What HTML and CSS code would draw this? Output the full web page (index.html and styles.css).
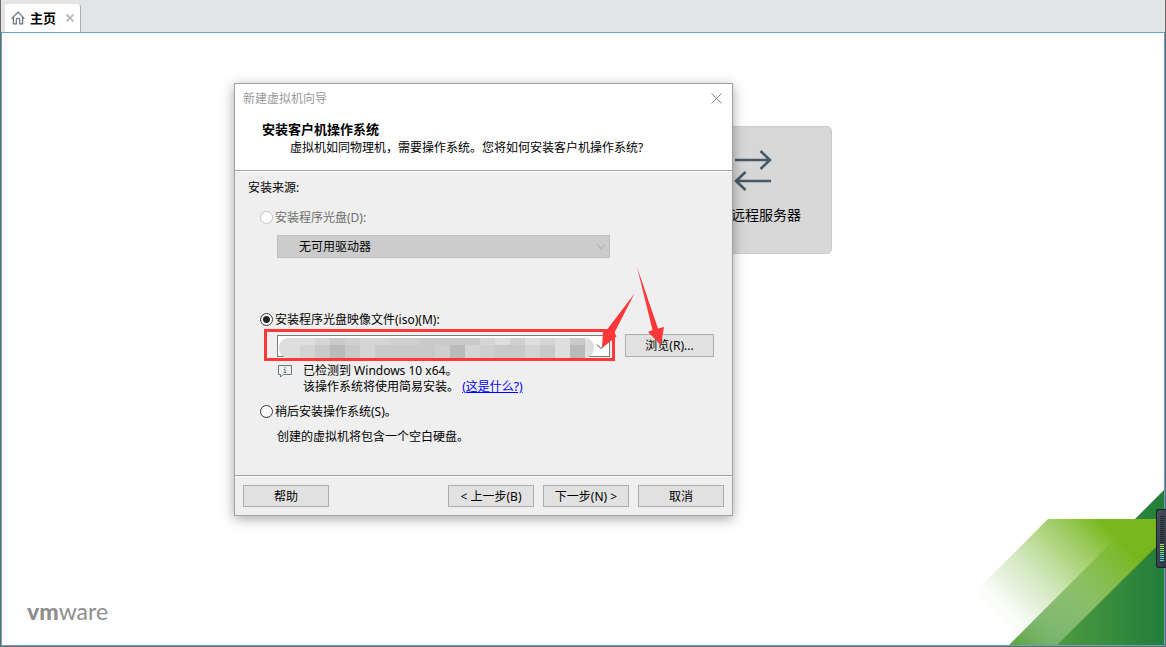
FILE: index.html
```html
<!DOCTYPE html>
<html lang="zh-CN">
<head>
<meta charset="utf-8">
<title>主页</title>
<link rel="stylesheet" href="styles.css">
</head>
<body>
<div class="app">
  <nav class="tabs">
    <div class="tab">
      <svg class="home" viewBox="0 0 14 14" width="14" height="14" fill="none" stroke="#5f7180" stroke-width="1.2"><path d="M.6 7.6 7 1.2l6.4 6.4M2.4 6.2v6.6h2.9V9q0-1.6 1.7-1.6T8.700 9v3.800h2.900V6.200"/></svg>
      <span class="tab-name">主页</span>
      <button class="tab-close" aria-label="关闭标签页"><svg viewBox="0 0 8 8" width="8" height="8" stroke="#bebebe" stroke-width="2"><path d="M.5.500l7 7M7.500.500l-7 7"/></svg></button>
    </div>
  </nav>
  <main class="workspace">
    <button class="card">
      <svg viewBox="0 0 40 42" width="40" height="42" fill="none" stroke="#465a66" stroke-width="2.600"><path d="M2 11h35M27.500 2l9.500 9-9.500 9M38 32H3M12.500 23 3 32l9.500 9"/></svg>
      <span>远程服务器</span>
    </button>
    <div class="brand"><b>vm</b>ware</div>
    <svg class="art" viewBox="922 490 242 155" width="242" height="155">
      <defs>
        <linearGradient id="dark" gradientUnits="userSpaceOnUse" x1="1009" y1="0" x2="1158" y2="0"><stop offset="0" stop-color="#60a843"/><stop offset="1" stop-color="#247f3a"/></linearGradient>
        <linearGradient id="light" gradientUnits="userSpaceOnUse" x1="984" y1="613" x2="1088" y2="509"><stop offset="0" stop-color="#fff" stop-opacity="0"/><stop offset=".25" stop-color="#c5dfb2" stop-opacity=".4"/><stop offset=".6" stop-color="#a3cf70" stop-opacity=".75"/><stop offset="1" stop-color="#78b81e"/></linearGradient>
      </defs>
      <path d="M1164 490v155h-155z" fill="url(#dark)"/>
      <path d="M1048 519h116v20l-107 106H922z" fill="url(#light)"/>
    </svg>

    <section class="dialog" role="dialog" aria-labelledby="wizard-title">
      <header class="head">
        <div class="titlebar">
          <span id="wizard-title">新建虚拟机向导</span>
          <button class="close" aria-label="关闭"><svg viewBox="0 0 11 11" width="11" height="11" stroke="#858585"><path d="M.5.500l10 10M10.500.500l-10 10"/></svg></button>
        </div>
        <h1>安装客户机操作系统</h1>
        <p>虚拟机如同物理机，需要操作系统。您将如何安装客户机操作系统?</p>
      </header>
      <form class="body">
        <div class="source">安装来源:</div>
        <label class="choice off"><input type="radio" name="src" disabled>安装程序光盘(D):</label>
        <div class="combo drive">
          <select aria-label="光盘驱动器" disabled><option>无可用驱动器</option></select>
          <svg class="chev" viewBox="0 0 10 6" width="10" height="6" fill="none" stroke="#a3a3a3"><path d="M1 .500l4 4 4-4"/></svg>
        </div>
        <label class="choice iso"><input type="radio" name="src" checked>安装程序光盘映像文件(iso)(M):</label>
        <div class="file-row">
          <div class="combo file">
            <select aria-label="映像文件"><option></option></select>
            <svg class="chev" viewBox="0 0 10 6" width="10" height="6" fill="none" stroke="#444"><path d="M1 .500l4 4 4-4"/></svg>
            <svg class="mosaic" viewBox="0 0 315 20" width="315" height="20" shape-rendering="crispEdges">
              <defs><clipPath id="pill"><rect width="315" height="20" rx="9"/></clipPath></defs>
              <g clip-path="url(#pill)">
                <path fill="#dedede" d="M0 0h315v20H0z"/>
                <path fill="#d5d5d5" d="M36 0h15v7H36zM81 0h30v7H81zM201 0h15v7h-15zM261 0h15v7h-15z"/>
                <path fill="#cacaca" d="M51 0h15v7H51zM141 0h60v7h-60zM291 0h15v7h-15z"/>
                <path fill="#d0d0d0" d="M66 0h15v7H66zM111 0h30v7h-30zM231 0h15v7h-15z"/>
                <path fill="#d4d4d4" d="M21 7h15v13H21zM81 7h15v13H81zM186 7h15v13h-15zM246 7h15v13h-15z"/>
                <path fill="#c9c9c9" d="M36 7h15v13H36zM66 7h15v13H66zM96 7h60v13H96zM216 7h30v13h-30zM261 7h15v13h-15z"/>
                <path fill="#bababa" d="M51 7h15v13H51zM171 7h15v13h-15zM291 7h15v13h-15z"/>
                <path fill="#cfcfcf" d="M156 7h15v13h-15zM201 7h15v13h-15z"/>
              </g>
            </svg>
            <div class="mark"></div>
          </div>
          <button type="button" class="btn browse">浏览(R)...</button>
        </div>
        <div class="info">
          <svg viewBox="0 0 15 13" width="15" height="13" fill="none" stroke="#687985"><path d="M.5.500h13v9H5.500l-3 2.500V9.500h-2z"/><path d="M7 2v1.500M5.500 4.500h1.500v3M5.500 7.500h3"/></svg>
          <div>已检测到 Windows 10 x64。<br>该操作系统将使用简易安装。 <a href="#">(这是什么?)</a></div>
        </div>
        <label class="choice later"><input type="radio" name="src">稍后安装操作系统(S)。</label>
        <p class="note">创建的虚拟机将包含一个空白硬盘。</p>
      </form>
      <footer class="foot">
        <button class="btn help">帮助</button>
        <button class="btn">&lt; 上一步(B)</button>
        <button class="btn">下一步(N) &gt;</button>
        <button class="btn">取消</button>
      </footer>
      <svg class="arrows" viewBox="600 265 70 90" width="70" height="90" fill="#fd3838"><path d="M634.500 293.500 614.500 332.500l2 4L602 348l1-17 4.500-2zM637 267l21 61.500 6-1.500-3 18-13-13 4.500-2z"/></svg>
    </section>
  </main>
  <aside class="meter" aria-hidden="true">
    <svg viewBox="0 0 4 46" width="4" height="46" shape-rendering="crispEdges">
      <path stroke="#20262c" stroke-width="4" stroke-dasharray="1 1" d="M2 0v28"/>
      <path stroke="#a0e850" stroke-width="4" stroke-dasharray="1 1" d="M2 28v6"/>
      <path stroke="#70e690" stroke-width="4" stroke-dasharray="1 1" d="M2 34v6"/>
      <path stroke="#40e4cc" stroke-width="4" stroke-dasharray="1 1" d="M2 40v6"/>
    </svg>
  </aside>
</div>
</body>
</html>
```
FILE: styles.css
```css
* { box-sizing: border-box; }
body {
  margin: 0;
  font: 12px/16px "Noto Sans", "Noto Sans CJK SC", sans-serif;
  color: #000;
}
button, select { font: inherit; color: inherit; }
.app {
  position: relative;
  display: flex;
  flex-direction: column;
  min-height: 100vh;
  border: 1px solid #6c6769;
  border-top: 0;
  background: #e3e4e6;
}
.tabs { display: flex; height: 32px; padding: 4px 0 0 4px; }
.tab {
  display: flex;
  align-items: center;
  padding: 0 6px;
  background: #fff;
  border-right: 1px solid #a9adb0;
  border-radius: 3px 3px 0 0;
}
.tab-name { margin-left: 5px; font-size: 13px; font-weight: bold; }
.tab-close { display: flex; margin-left: 10px; padding: 0; border: 0; background: none; }
.workspace {
  position: relative;
  flex: 1;
  padding-top: 93px;
  border: 1px solid #62a4c4;
  background: #fff;
  overflow: hidden;
}
.card {
  display: flex;
  flex-direction: column;
  align-items: center;
  gap: 14px;
  width: 159px;
  height: 128px;
  margin-left: calc(50% + 90px);
  padding: 22px 30px;
  border: 1px solid #ccc;
  border-radius: 5px;
  background: #d7d7d7;
  font-size: 14px;
  line-height: 20px;
}
.card span { align-self: flex-end; }
.brand {
  position: absolute;
  left: 25px;
  bottom: 18px;
  font: 23px/32px Lato, sans-serif;
  color: #8e8e8e;
}
.brand b { font-weight: 900; }
.art { position: absolute; right: 0; bottom: 0; }

.dialog {
  position: absolute;
  left: 232px;
  top: 50px;
  width: 499px;
  border: 1px solid #a2a2a2;
  background: #efefef;
  box-shadow: 0 3px 12px rgba(0, 0, 0, .35);
}
.head { padding-bottom: 12px; border-bottom: 1px solid #a0a0a0; background: #fff; }
.titlebar {
  display: flex;
  align-items: center;
  justify-content: space-between;
  height: 29px;
  margin-bottom: 8px;
  padding: 0 10px 0 8px;
  color: #999;
}
.close { display: flex; padding: 0; border: 0; background: none; }
.head h1 { margin: 0 0 1px 27px; font-size: 13px; line-height: 16px; }
.head p { margin: 0 0 0 55px; line-height: 20px; }
.body { padding: 8px 18px 30px 13px; border-top: 1px solid #fff; }
.choice { display: flex; align-items: center; gap: 2px; margin-left: 12px; }
.choice input {
  appearance: none;
  width: 13px;
  height: 13px;
  margin: 0 0 2px;
  border: 1px solid #333;
  border-radius: 50%;
  background: #fff;
}
.choice input:checked { background: radial-gradient(circle, #222 3px, #fff 4px); }
.off { margin-top: 14px; color: #6d6d6d; }
.off input { border-color: #c4c4c4; }
.combo { position: relative; width: 333px; }
.combo select {
  display: block;
  appearance: none;
  width: 100%;
  border: 1px solid #7a7a7a;
  border-radius: 0;
  background: #fff;
}
.chev { position: absolute; right: 4px; top: 9px; }
.drive { margin: 9px 0 0 29px; }
.drive select {
  height: 23px;
  padding: 1px 21px 0;
  border-color: #bfbfbf;
  background: #ccc;
  color: #000;
  opacity: 1;
}
.iso { margin-top: 54px; }
.file-row { display: flex; align-items: center; gap: 15px; margin: 6px 0 0 29px; }
.file select { height: 22px; }
.mosaic { position: absolute; left: 2px; top: 3px; pointer-events: none; }
.mark {
  position: absolute;
  inset: -6px -5px -4px -13px;
  border: 3px solid #fd3838;
  pointer-events: none;
}
.btn {
  width: 86px;
  height: 22px;
  padding: 1px 0 0;
  border: 1px solid #adadad;
  background: #e1e1e1;
}
.browse { width: 89px; height: 23px; }
.info { display: flex; gap: 10px; margin: 6px 0 0 30px; }
.info svg { margin-top: 2px; }
.info a { color: #00f; }
.later { margin-top: 9px; }
.note { margin: 9px 0 0 29px; }
.foot {
  display: flex;
  gap: 9px;
  margin-top: 1px;
  padding: 8px;
  border-top: 1px solid #fff;
  box-shadow: 0 -1px #a0a0a0;
}
.help { margin-right: auto; }
.arrows { position: absolute; left: 365px; top: 181px; pointer-events: none; }

.meter {
  position: absolute;
  right: -1px;
  top: 509px;
  width: 10px;
  height: 59px;
  padding: 6px 0 0 3px;
  border: 1px solid #17202a;
  border-right: 0;
  border-radius: 3px 0 0 3px;
  background: linear-gradient(100deg, #48535a, #2c3644);
}
.meter svg { display: block; }
```
